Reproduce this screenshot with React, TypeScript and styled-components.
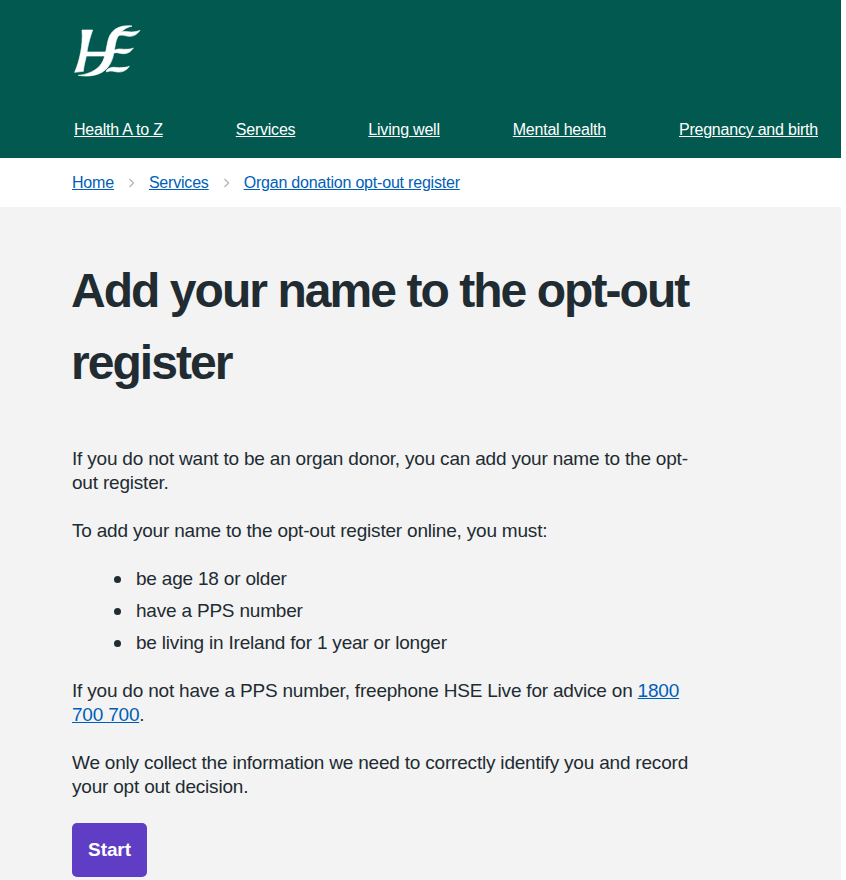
import React, { FC } from 'react';
import styled, { createGlobalStyle } from 'styled-components';

const GlobalStyle = createGlobalStyle`
  html, body {
    margin: 0;
    padding: 0;
    background: #ffffff;
    overflow: hidden;
  }
  body {
    font-family: "Liberation Sans", Arial, sans-serif;
    color: #212b32;
  }
`;

const Page = styled.div`
  width: 841px;
  height: 880px;
  overflow: hidden;
  background: #f3f3f3;
`;

const Header = styled.header`
  background: #02594f;
  height: 158px;
  display: flex;
  flex-direction: column;
`;

const LogoLink = styled.a`
  display: block;
  width: 120px;
  height: 80px;
  margin: 10px 0 0 50px;
`;

const Nav = styled.nav`
  display: flex;
  gap: 73px;
  margin: 28px 0 0 74px;
  white-space: nowrap;
`;

const NavLink = styled.a`
  color: #ffffff;
  font-size: 16px;
  line-height: 24px;
  letter-spacing: -0.22px;
  text-decoration: underline;
`;

const Breadcrumbs = styled.nav`
  background: #ffffff;
  height: 49px;
  display: flex;
  align-items: center;
  padding-left: 72px;
  font-size: 16px;
  letter-spacing: -0.2px;
`;

const CrumbLink = styled.a`
  color: #005eb8;
  text-decoration: underline;
`;

const Chevron = styled.svg`
  width: 7px;
  height: 10px;
  margin: 1px 14px 0 14px;
  fill: none;
  stroke: #aeb7bd;
  stroke-width: 1.3;
`;

const Main = styled.main`
  padding: 48px 0 0 72px;
  width: 620px;
`;

const Title = styled.h1`
  margin: 0 0 48px -1px;
  font-size: 48px;
  line-height: 72px;
  font-weight: 700;
  letter-spacing: -1.95px;
`;

const Para = styled.p`
  margin: 0 0 24px;
  font-size: 19px;
  line-height: 24px;
  letter-spacing: -0.2px;
`;

const List = styled.ul`
  margin: 0 0 24px;
  padding: 0 0 0 41px;
  list-style: none;
  font-size: 19px;
  line-height: 24px;
  letter-spacing: -0.2px;
`;

const Item = styled.li`
  display: flex;
  align-items: center;
  gap: 15px;
  margin-bottom: 8px;
  &::before {
    content: '';
    width: 7px;
    height: 7px;
    margin-left: 1px;
    border-radius: 50%;
    background: #212b32;
  }
  &:last-child {
    margin-bottom: 0;
  }
`;

const PhoneLink = styled.a`
  color: #005eb8;
  text-decoration: underline;
`;

const StartButton = styled.button`
  display: block;
  width: 75px;
  height: 54px;
  padding: 0;
  border: 0;
  border-radius: 5px;
  background: #5f3dc4;
  color: #ffffff;
  font-family: inherit;
  font-size: 19px;
  font-weight: 700;
  letter-spacing: -0.1px;
`;

const HseLogo: FC = () => (
  <svg width="120" height="80" viewBox="0 0 360 240" fill="#ffffff" stroke="#ffffff" strokeWidth="2" aria-label="HSE">
    <path d="M96 60 L128 60 C119 85 113 110 111 126 L174 126 L171 138 L109 138 C105 155 101 170 100 184 L74 187 C88 155 100 105 96 60 Z" />
    <path d="M246 48 C212 44 186 56 176 85 C167 115 168 150 147 170 C128 188 105 194 85 196 C118 202 155 196 175 170 C193 147 192 115 199 91 C206 69 222 54 246 48 Z" />
    <path d="M204 71 C220 60 232 66 245 66 C255 66 263 64 270 61 C262 73 250 80 237 79 C225 78 216 72 204 78 Z" />
    <path d="M187 125 C203 113 213 118 225 118 C235 118 243 117 250 114 C243 125 232 132 219 131 C207 130 198 125 186 131 Z" />
    <path d="M170 180 C185 168 196 173 208 173 C218 173 230 172 238 169 C230 181 218 187 204 186 C192 185 182 180 169 186 Z" />
  </svg>
);

const navItems = ['Health A to Z', 'Services', 'Living well', 'Mental health', 'Pregnancy and birth'];
const crumbs = ['Home', 'Services', 'Organ donation opt-out register'];
const rules = ['be age 18 or older', 'have a PPS number', 'be living in Ireland for 1 year or longer'];

const App: FC = () => (
  <Page>
    <GlobalStyle />
    <Header>
      <LogoLink href="#">
        <HseLogo />
      </LogoLink>
      <Nav>
        {navItems.map((item) => (
          <NavLink href="#" key={item}>{item}</NavLink>
        ))}
      </Nav>
    </Header>
    <Breadcrumbs>
      {crumbs.map((crumb, i) => (
        <React.Fragment key={crumb}>
          {i > 0 && (
            <Chevron viewBox="0 0 7 10">
              <path d="M1.5 1 L5.5 5 L1.5 9" />
            </Chevron>
          )}
          <CrumbLink href="#">{crumb}</CrumbLink>
        </React.Fragment>
      ))}
    </Breadcrumbs>
    <Main>
      <Title>Add your name to the opt-out register</Title>
      <Para>If you do not want to be an organ donor, you can add your name to the opt-out register.</Para>
      <Para>To add your name to the opt-out register online, you must:</Para>
      <List>
        {rules.map((rule) => (
          <Item key={rule}><span>{rule}</span></Item>
        ))}
      </List>
      <Para>
        If you do not have a PPS number, freephone HSE Live for advice on <PhoneLink href="#">1800 700 700</PhoneLink>.
      </Para>
      <Para>We only collect the information we need to correctly identify you and record your opt out decision.</Para>
      <StartButton type="button">Start</StartButton>
    </Main>
  </Page>
);

export default App;
